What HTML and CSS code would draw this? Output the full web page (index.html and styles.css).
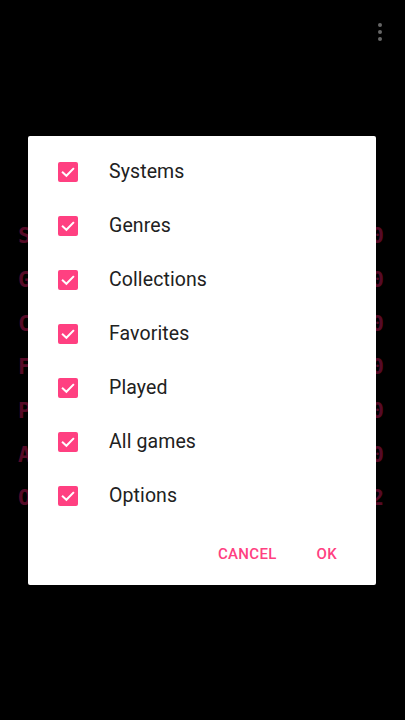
FILE: index.html
```html
<!DOCTYPE html>
<html>
<head>
<meta charset="utf-8">
<link rel="stylesheet" href="styles.css">
</head>
<body>
<div class="screen">
  <div class="toolbar">
    <div class="menu"><span></span><span></span><span></span></div>
  </div>
  <div class="list">
    <div class="lrow"><span>Systems</span><span>0</span></div>
    <div class="lrow"><span>Genres</span><span>0</span></div>
    <div class="lrow"><span>Collections</span><span>0</span></div>
    <div class="lrow"><span>Favorites</span><span>0</span></div>
    <div class="lrow"><span>Played</span><span>0</span></div>
    <div class="lrow"><span>All games</span><span>0</span></div>
    <div class="lrow"><span>Options</span><span>2</span></div>
  </div>
  <div class="scrim">
    <div class="dialog">
      <div class="items">
        <div class="item"><span class="cb"><svg viewBox="0 0 20 20"><path d="M4.8 10.4 L8.4 13.8 L15.2 6.8"/></svg></span><span class="label">Systems</span></div>
        <div class="item"><span class="cb"><svg viewBox="0 0 20 20"><path d="M4.8 10.4 L8.4 13.8 L15.2 6.8"/></svg></span><span class="label">Genres</span></div>
        <div class="item"><span class="cb"><svg viewBox="0 0 20 20"><path d="M4.8 10.4 L8.4 13.8 L15.2 6.8"/></svg></span><span class="label">Collections</span></div>
        <div class="item"><span class="cb"><svg viewBox="0 0 20 20"><path d="M4.8 10.4 L8.4 13.8 L15.2 6.8"/></svg></span><span class="label">Favorites</span></div>
        <div class="item"><span class="cb"><svg viewBox="0 0 20 20"><path d="M4.8 10.4 L8.4 13.8 L15.2 6.8"/></svg></span><span class="label">Played</span></div>
        <div class="item"><span class="cb"><svg viewBox="0 0 20 20"><path d="M4.8 10.4 L8.4 13.8 L15.2 6.8"/></svg></span><span class="label">All games</span></div>
        <div class="item"><span class="cb"><svg viewBox="0 0 20 20"><path d="M4.8 10.4 L8.4 13.8 L15.2 6.8"/></svg></span><span class="label">Options</span></div>
      </div>
      <div class="actions">
        <span class="btn">CANCEL</span>
        <span class="btn">OK</span>
      </div>
    </div>
  </div>
</div>
</body>
</html>
```
FILE: styles.css
```css
html, body {
  margin: 0;
  padding: 0;
  background: #000;
}
.screen {
  position: relative;
  width: 405px;
  height: 720px;
  overflow: hidden;
  background: #000;
  font-family: Roboto, "Noto Sans", sans-serif;
}
.toolbar {
  height: 64px;
  display: flex;
  justify-content: flex-end;
  align-items: flex-start;
}
.menu {
  display: flex;
  flex-direction: column;
  gap: 3px;
  padding: 23px 23px 0 0;
}
.menu span {
  width: 4px;
  height: 4px;
  border-radius: 50%;
  background: #fff;
}
.list {
  padding: 150px 21px 0 18px;
}
.lrow {
  height: 43.7px;
  display: flex;
  justify-content: space-between;
  align-items: center;
  color: #d81b60;
  font-family: "DejaVu Sans Mono", monospace;
  font-weight: bold;
  font-size: 22px;
}
.scrim {
  position: absolute;
  inset: 0;
  background: rgba(0, 0, 0, 0.6);
  display: flex;
  align-items: center;
  justify-content: center;
}
.dialog {
  width: 348px;
  height: 449px;
  margin-right: 1px;
  background: #fff;
  border-radius: 2px;
  box-sizing: border-box;
  padding-top: 9px;
  display: flex;
  flex-direction: column;
}
.items {
  display: flex;
  flex-direction: column;
}
.item {
  height: 54px;
  display: flex;
  align-items: center;
  padding-left: 30px;
}
.cb {
  width: 20px;
  height: 20px;
  border-radius: 2px;
  background: #ff4081;
  display: flex;
}
.cb svg {
  width: 20px;
  height: 20px;
  fill: none;
  stroke: #fff;
  stroke-width: 2;
  stroke-linecap: square;
}
.label {
  margin-left: 31px;
  font-size: 19.5px;
  color: #212121;
  letter-spacing: 0.1px;
}
.actions {
  margin-top: 13px;
  height: 36px;
  display: flex;
  justify-content: flex-end;
  align-items: center;
  gap: 40px;
  padding-right: 39px;
}
.btn {
  font-size: 15px;
  font-weight: 500;
  color: #ff4081;
  letter-spacing: 0.3px;
}
```
